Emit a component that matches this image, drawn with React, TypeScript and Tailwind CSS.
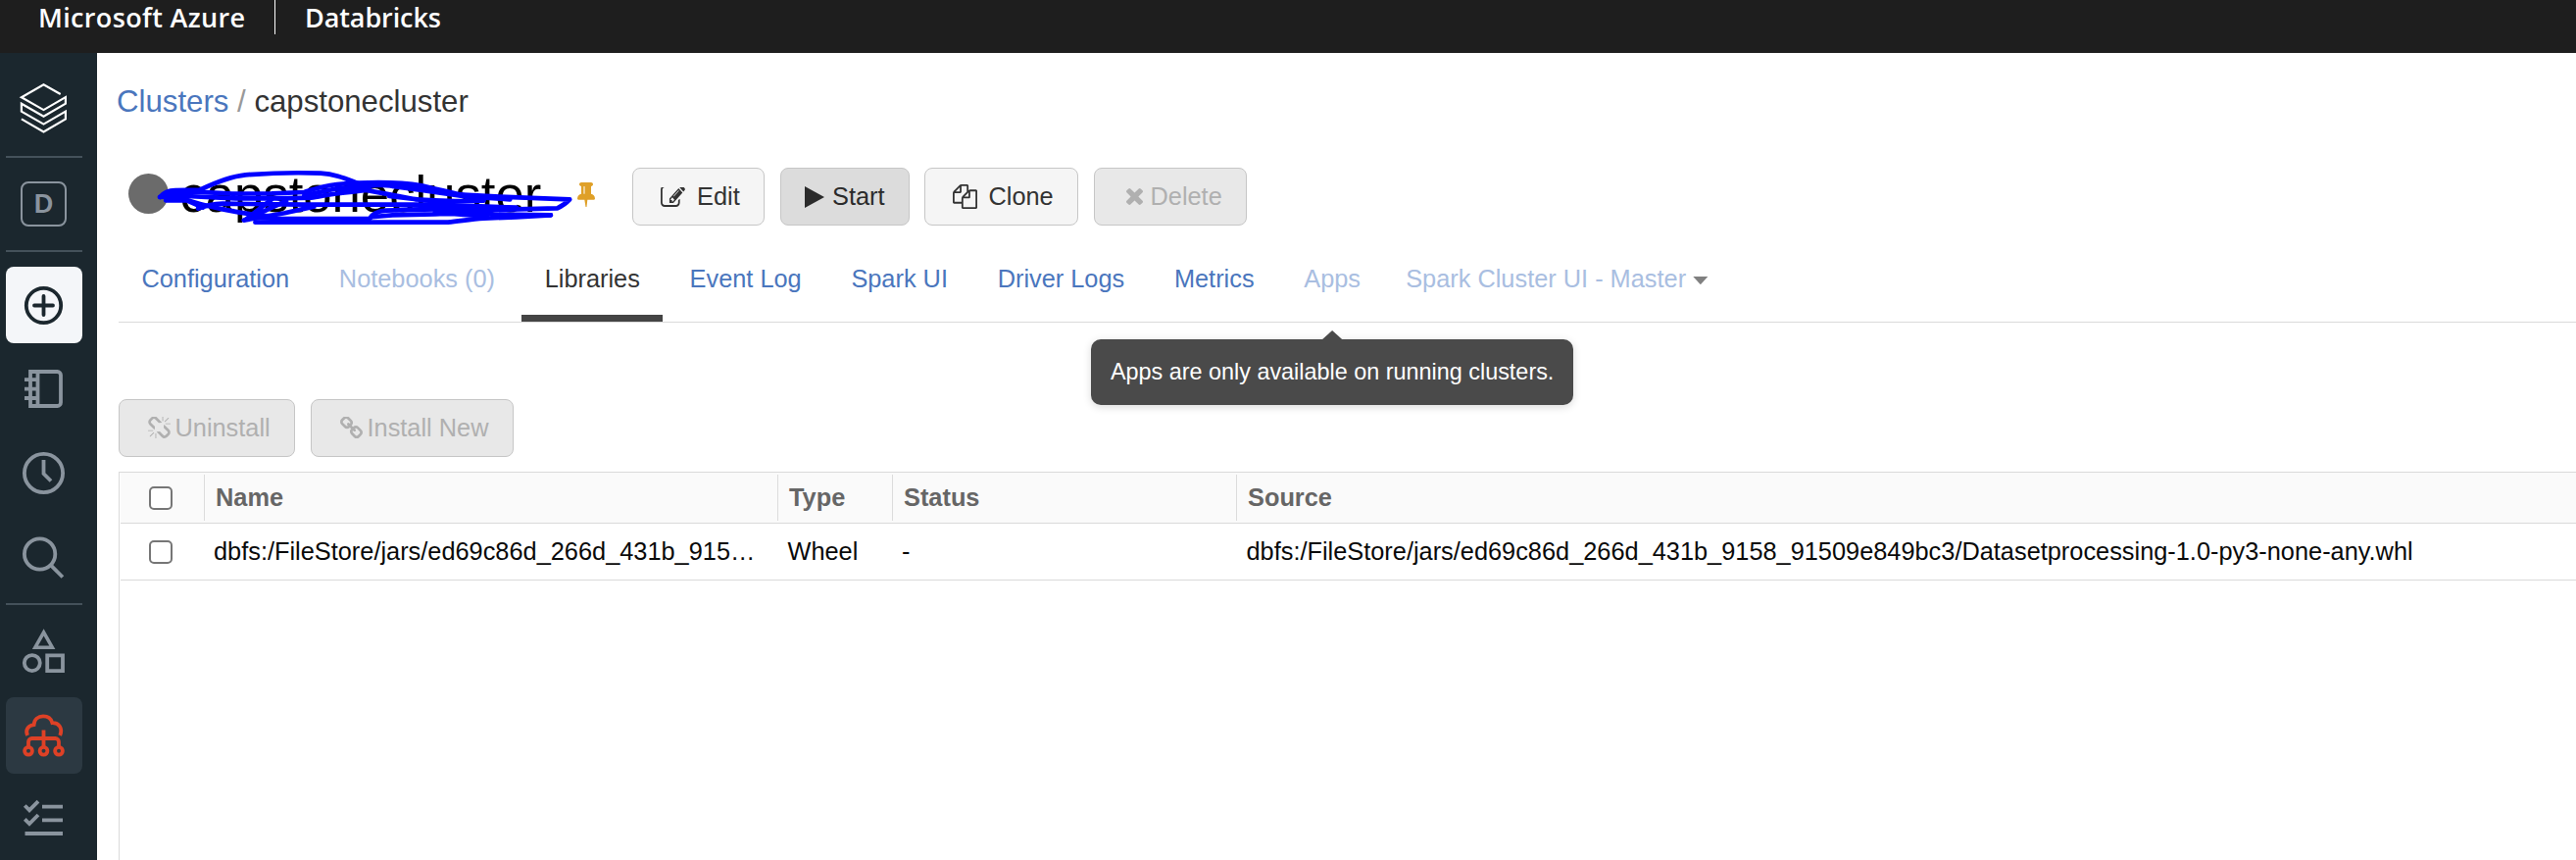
import type { ReactNode } from "react";

const FA = {
  edit: "M888 1184l116-116-152-152-116 116v56h96v96h56zm440-720q-16-16-33 1l-350 350q-17 17-1 33t33-1l350-350q17-17 1-33zm80 594v190q0 119-84.5 203.5t-203.5 84.5h-832q-119 0-203.5-84.5t-84.5-203.5v-832q0-119 84.5-203.5t203.5-84.5h832q63 0 117 25 15 7 18 23 3 17-9 29l-49 49q-14 14-32 8-23-6-45-6h-832q-66 0-113 47t-47 113v832q0 66 47 113t113 47h832q66 0 113-47t47-113v-126q0-13 9-22l64-64q15-15 35-7t20 29zm-96-738l288 288-672 672h-288v-288zm444 132l-92 92-288-288 92-92q28-28 68-28t68 28l152 152q28 28 28 68t-28 68z",
  copy: "M1696 384q40 0 68 28t28 68v1216q0 40-28 68t-68 28h-960q-40 0-68-28t-28-68v-288h-544q-40 0-68-28t-28-68v-672q0-40 20-88t48-76l408-408q28-28 76-48t88-20h416q40 0 68 28t28 68v328q68-40 128-40h416zm-544 213l-299 299h299v-299zm-640-384l-299 299h299v-299zm196 647l316-316v-416h-384v416q0 40-28 68t-68 28h-416v640h512v-256q0-40 20-88t48-76zm956 804v-1152h-384v416q0 40-28 68t-68 28h-416v640h896z",
  times: "M1490 1322q0 40-28 68l-136 136q-28 28-68 28t-68-28l-294-294-294 294q-28 28-68 28t-68-28l-136-136q-28-28-28-68t28-68l294-294-294-294q-28-28-28-68t28-68l136-136q28-28 68-28t68 28l294 294 294-294q28-28 68-28t68 28l136 136q28 28 28 68t-28 68l-294 294 294 294q28 28 28 68z",
  unlink: "M503 1271l-256 256q-10 9-23 9-12 0-23-9-9-10-9-23t9-23l256-256q10-9 23-9t23 9q9 10 9 23t-9 23zm169 41v320q0 14-9 23t-23 9-23-9-9-23v-320q0-14 9-23t23-9 23 9 9 23zm-224-224q0 14-9 23t-23 9h-320q-14 0-23-9t-9-23 9-23 23-9h320q14 0 23 9t9 23zm1264 128q0 120-85 203l-147 146q-83 83-203 83-121 0-204-85l-334-335q-21-21-42-56l239-18 273 274q28 28 68 28t68-27l147-146q28-28 28-67 0-40-28-68l-274-275 18-239q35 21 56 42l336 336q84 86 84 204zm-617-724l-239 18-273-274q-28-28-68-28-39 0-68 27l-147 146q-28 28-28 67 0 40 28 68l274 274-18 240q-35-21-56-42l-336-336q-84-86-84-204 0-120 85-203l147-146q83-83 203-83 121 0 204 85l334 335q21 21 42 56zm633 84q0 14-9 23t-23 9h-320q-14 0-23-9t-9-23 9-23 23-9h320q14 0 23 9t9 23zm-544-544v320q0 14-9 23t-23 9-23-9-9-23v-320q0-14 9-23t23-9 23 9 9 23zm407 151l-256 256q-11 9-23 9t-23-9q-9-10-9-23t9-23l256-256q10-9 23-9t23 9q9 10 9 23t-9 23z",
  link: "M1520 1216q0-40-28-68l-208-208q-28-28-68-28-42 0-72 32 3 3 19 18.5t21.5 21.5 15 19 13 25.5 3.5 27.5q0 40-28 68t-68 28q-15 0-27.5-3.5t-25.5-13-19-15-21.5-21.5-18.5-19q-33 31-33 73 0 40 28 68l206 207q27 27 68 27 40 0 68-26l147-146q28-28 28-67zm-703-705q0-40-28-68l-206-207q-28-28-68-28-39 0-68 27l-147 146q-28 28-28 67 0 40 28 68l208 208q27 27 68 27 42 0 72-31-3-3-19-18.5t-21.5-21.5-15-19-13-25.5-3.5-27.5q0-40 28-68t68-28q15 0 27.5 3.5t25.5 13 19 15 21.5 21.5 18.5 19q33-31 33-73zm895 705q0 120-85 203l-147 146q-83 83-203 83-121 0-204-85l-206-207q-83-83-83-203 0-123 88-209l-88-88q-86 88-208 88-120 0-204-84l-208-208q-84-84-84-204t85-203l147-146q83-83 203-83 121 0 204 85l206 207q83 83 83 203 0 123-88 209l88 88q86-88 208-88 120 0 204 84l208 208q84 84 84 204z",
  pin: "M800 864v-448q0-14-9-23t-23-9-23 9-9 23v448q0 14 9 23t23 9 23-9 9-23zm672 352q0 26-19 45t-45 19h-429l-51 483q-2 12-10.5 20.5t-20.5 8.5h-1q-27 0-32-27l-76-485h-404q-26 0-45-19t-19-45q0-123 78.5-221.5t177.5-98.5v-512q-52 0-90-38t-38-90 38-90 90-38h640q52 0 90 38t38 90-38 90-90 38v512q99 0 177.5 98.5t78.5 221.5z",
};

function Glyph({ d, box = "0 0 1792 1792", className }: { d: string; box?: string; className: string }) {
  return (
    <svg viewBox={box} className={`shrink-0 fill-current ${className}`} preserveAspectRatio="none">
      <path d={d} />
    </svg>
  );
}

function SideIcon({ children, className = "" }: { children: ReactNode; className?: string }) {
  return (
    <div className={`flex h-[78px] w-[78px] shrink-0 items-center justify-center rounded-[8px] ${className}`}>
      <svg
        viewBox="0 0 52 52"
        className="h-[52px] w-[52px]"
        fill="none"
        stroke="currentColor"
        strokeWidth="3.8"
      >
        {children}
      </svg>
    </div>
  );
}

function Divider() {
  return <div className="h-[2px] w-[78px] shrink-0 bg-[#44515a]" />;
}

function Sidebar() {
  return (
    <nav className="flex w-[99px] shrink-0 flex-col bg-[#1b272e] pl-[6px] text-[#8a949e]">
      <SideIcon className="mt-[17px] text-white">
        <path
          d="M43.2 12 26 2.2 3.4 15.2 26 28.1 48.4 15.1 V21.6 L26 34.7 3.4 21.7 V29.6 L26 42.6 48.4 29.6 V37.4 L26 50.4 3.4 37.4"
          strokeWidth="2.2"
          transform="translate(-0.5 0)"
        />
      </SideIcon>
      <div className="h-[10px] shrink-0" />
      <Divider />
      <div className="flex h-[94px] w-[78px] shrink-0 items-center">
        <div className="ml-[15px] flex h-[46px] w-[47px] items-center justify-center rounded-[8px] border-[2.6px] border-[#8a949e] text-[27px] leading-none font-bold">
          D
        </div>
      </div>
      <Divider />
      <SideIcon className="mt-[15px] bg-[#f4f6f9] text-[#1b272e]">
        <circle cx="25.5" cy="26.5" r="17.7" />
        <path d="M25.5 17v19M16 26.5h19" strokeLinecap="round" />
      </SideIcon>
      <SideIcon className="mt-[8px]">
        <path d="M12 8h27.5a3.5 3.5 0 0 1 3.5 3.5v28a3.5 3.5 0 0 1-3.5 3.5H12z" />
        <path d="M19.5 8v35M6 16.2h12M6 25.6h12M6 35h12" />
      </SideIcon>
      <SideIcon className="mt-[8px]">
        <circle cx="25.5" cy="25.5" r="19.6" />
        <path d="M25.5 12v14l7.5 7.5" />
      </SideIcon>
      <SideIcon className="mt-[8px]">
        <circle cx="21.6" cy="22" r="15.7" />
        <path d="M32.6 33.2 44.9 45.5" />
      </SideIcon>
      <div className="h-[7px] shrink-0" />
      <Divider />
      <SideIcon className="mt-[8px]">
        <path d="M25.6 6.8 34.3 22.2H16.9z" strokeWidth="3.6" />
        <circle cx="13.8" cy="38.1" r="8" />
        <path d="M29.2 30.3h15.8v15.8H29.2z" />
      </SideIcon>
      <SideIcon className="mt-[8px] bg-[#2c3942] text-[#de4126]">
        <g transform="translate(0 1.5)">
          <path d="M9 24.5C6.6 19 9.5 14.2 15.6 13.6 16 8 20 4.9 25 4.9s8.2 2.5 9.4 6.8C41 11.5 45.3 17 42.2 24.5" />
          <path d="M25.5 19v16.5M10 35.5V31a3.5 3.5 0 0 1 3.5-3.5h24a3.5 3.5 0 0 1 3.5 3.5v4.5" />
          <circle cx="10" cy="40.3" r="3.9" />
          <circle cx="25.5" cy="40.3" r="3.9" />
          <circle cx="41" cy="40.3" r="3.9" />
        </g>
      </SideIcon>
      <SideIcon className="mt-[8px]">
        <path d="M6.3 11.5 11 16.2 20 7.2M6.3 25.3 11 30 20 21M24 12.6h21M24 26.3h21M6.5 40h38.5" />
      </SideIcon>
    </nav>
  );
}

function Button({ children, className }: { children: ReactNode; className: string }) {
  return (
    <button
      className={`flex h-[59px] shrink-0 items-center rounded-[8px] border-[1.5px] border-[#c6c6c6] text-[25.35px] whitespace-nowrap ${className}`}
    >
      {children}
    </button>
  );
}

function Scribble() {
  return (
    <svg
      viewBox="140 60 1290 190"
      className="absolute top-[-1px] left-[36px] h-[63.3px] w-[430px]"
      fill="none"
      stroke="#0000ff"
      strokeWidth="14"
      strokeLinecap="round"
      strokeLinejoin="round"
    >
      <path d="M158 153C170 138 182 132 205 132L280 131C320 112 370 90 420 85C500 79 600 78 650 80C700 83 730 98 768 112" />
      <path d="M158 153 240 150 390 157 520 157 620 155C660 149 700 140 740 138L800 130" />
      <path d="M180 142 270 137 380 143 500 142 600 138C640 125 660 118 700 114C800 106 900 108 960 118C1010 130 1060 142 1110 152L1230 160" />
      <path d="M600 148 700 127 830 116 920 122 1060 144 1200 152 1413 160C1402 172 1390 180 1375 187L1180 192 1030 188 880 192" />
      <path d="M176 163 240 163 290 185M230 158C290 180 400 204 500 212" />
      <path d="M275 188C300 178 320 174 350 173L600 176 1000 176 1250 185" />
      <path d="M545 165 480 195 415 224 540 202 630 182M500 160 420 222" />
      <path d="M450 230 800 230 1040 230C1080 226 1110 221 1150 218L1250 214 1355 208" />
      <path d="M440 216 520 219 800 219C808 205 825 196 850 194L1170 186" />
      <path d="M808 214 870 208 1000 205 1150 198 1180 206 1355 208M1000 200 1160 212" />
      <path d="M700 127 790 132 850 143 940 160 1060 166M870 120 960 132 1100 152M860 150 1000 166 1150 164" />
    </svg>
  );
}

const HEADER = "flex h-[47px] items-center border-l-[1.5px] border-[#dcdcdc] pl-[11px] font-bold";

function Check() {
  return (
    <span className="mt-[1px] block h-[24px] w-[24px] rounded-[5px] border-2 border-[#767676] bg-white" />
  );
}

export default function App() {
  const tab = "flex h-[87px] shrink-0 items-center px-[23.4px] whitespace-nowrap mr-[3.9px]";
  return (
    <div className="flex h-[877px] w-full flex-col overflow-hidden bg-white font-['Liberation_Sans',Arial,sans-serif]">
      <header className="flex h-[54px] shrink-0 bg-[#1e1e1e] font-['Open_Sans',sans-serif] text-[27px] font-semibold text-white">
        <div className="h-[35px] w-[240px] pl-[39px] leading-[35px] tracking-[0.35px] whitespace-nowrap">
          Microsoft Azure
        </div>
        <div className="ml-[40px] h-[35px] w-px bg-white" />
        <div className="pl-[30px] leading-[35px] tracking-[-0.1px]">Databricks</div>
      </header>
      <div className="flex min-h-0 flex-1">
        <Sidebar />
        <main className="flex min-w-0 flex-1 flex-col pl-[22px]">
          <div className="mt-[30px] ml-[-2px] flex h-[40px] shrink-0 items-center text-[31.2px] whitespace-pre text-[#333]">
            <span className="text-[#4a76bd]">Clusters</span>
            <span className="text-[#999]"> / </span>
            <span>capstonecluster</span>
          </div>
          <div className="mt-[47px] flex h-[59px] shrink-0 items-center">
            <div className="relative flex h-[59px] w-[524px] shrink-0 items-center">
              <div className="mb-[6px] ml-[10px] h-[40.5px] w-[40.5px] shrink-0 rounded-full bg-[#6b6b6b]" />
              <div className="mb-[6px] ml-[12px] text-[52.65px] leading-[59px] text-black">capstonecluster</div>
              <Scribble />
              <Glyph
                d={FA.pin}
                box="320 128 1152 1664"
                className="mr-[38px] mb-[4px] ml-auto h-[25.5px] w-[18px] text-[#dfa028]"
              />
            </div>
            <Button className="w-[135px] bg-[#f5f5f5] text-[#333]">
              <Glyph d={FA.edit} box="0 256 1792 1280" className="ml-[28px] h-[20px] w-[25px]" />
              <span className="ml-[12px]">Edit</span>
            </Button>
            <Button className="ml-[16px] w-[132px] bg-[#dcdcdc] text-[#2b2b2b]">
              <Glyph d="M0 0 20 11 0 22z" box="0 0 20 22" className="ml-[24px] h-[22px] w-[20px]" />
              <span className="ml-[8px]">Start</span>
            </Button>
            <Button className="ml-[15px] w-[157px] bg-[#f5f5f5] text-[#333]">
              <Glyph d={FA.copy} className="ml-[27.5px] h-[25px] w-[25px]" />
              <span className="ml-[12px]">Clone</span>
            </Button>
            <Button className="ml-[16px] w-[156px] bg-[#e8e8e8] text-[#b0b0b0]">
              <Glyph d={FA.times} box="302 366 1188 1188" className="ml-[32px] h-[17px] w-[17px]" />
              <span className="ml-[7.5px]">Delete</span>
            </Button>
          </div>
          <div className="mt-[11px] flex h-[88px] shrink-0 items-start border-b-[1.5px] border-[#dadada] text-[25.35px] text-[#4a76bd]">
            <div className={tab}>Configuration</div>
            <div className={`${tab} text-[#a9bee1]`}>Notebooks (0)</div>
            <div className={`${tab} border-b-[7px] border-[#444] pt-[7px] text-[#333]`}>Libraries</div>
            <div className={tab}>Event Log</div>
            <div className={tab}>Spark UI</div>
            <div className={tab}>Driver Logs</div>
            <div className={tab}>Metrics</div>
            <div className={`${tab} relative text-[#a9bee1]`}>
              Apps
              <div className="absolute top-[105px] left-1/2 z-10 flex h-[67px] w-[492px] -translate-x-1/2 items-center justify-center rounded-[10px] bg-[#4a4a4a] text-[23.4px] text-white shadow-[0_2px_8px_rgba(0,0,0,0.15)]">
                Apps are only available on running clusters.
                <div className="absolute top-[-9px] left-1/2 h-[9px] w-[20px] -translate-x-1/2 bg-[#4a4a4a] [clip-path:polygon(50%_0,100%_100%,0_100%)]" />
              </div>
            </div>
            <div className={`${tab} ml-[-4.5px] text-[#a9bee1]`}>
              Spark Cluster UI - Master
              <span className="mt-[3px] ml-[7px] h-[8.5px] w-[15.5px] bg-[#808080] [clip-path:polygon(0_0,100%_0,50%_100%)]" />
            </div>
          </div>
          <div className="mt-[78px] flex shrink-0 gap-[16px]">
            <Button className="w-[180px] bg-[#e8e8e8] text-[#b0b0b0]">
              <Glyph d={FA.unlink} box="64 64 1664 1664" className="ml-[28.5px] h-[23px] w-[23px]" />
              <span className="ml-[5px]">Uninstall</span>
            </Button>
            <Button className="w-[207px] bg-[#e8e8e8] text-[#b0b0b0]">
              <Glyph d={FA.link} box="80 80 1632 1632" className="ml-[28.5px] h-[23px] w-[23px]" />
              <span className="ml-[5px]">Install New</span>
            </Button>
          </div>
          <section className="mt-[15px] flex min-h-0 flex-1 flex-col border-t-[1.5px] border-l-[1.5px] border-[#dadada] pl-px text-[25.35px]">
            <div className="grid h-[52px] shrink-0 grid-cols-[85px_585px_117px_351px_1fr] items-center border-b-[1.5px] border-[#dadada] bg-[#fafafa] text-[#666]">
              <div className="pl-[29px]"><Check /></div>
              <div className={HEADER}>Name</div>
              <div className={HEADER}>Type</div>
              <div className={HEADER}>Status</div>
              <div className={HEADER}>Source</div>
            </div>
            <div className="grid h-[58px] shrink-0 grid-cols-[85px_585px_117px_351px_1fr] items-center border-b-[1.5px] border-[#dadada] text-[#0a0a0a]">
              <div className="pl-[29px]"><Check /></div>
              <div className="pl-[10px] whitespace-nowrap">dbfs:/FileStore/jars/ed69c86d_266d_431b_915…</div>
              <div className="pl-[10.5px]">Wheel</div>
              <div className="pl-[10px]">-</div>
              <div className="pl-[10.5px] whitespace-nowrap">
                dbfs:/FileStore/jars/ed69c86d_266d_431b_9158_91509e849bc3/Datasetprocessing-1.0-py3-none-any.whl
              </div>
            </div>
          </section>
        </main>
      </div>
    </div>
  );
}
